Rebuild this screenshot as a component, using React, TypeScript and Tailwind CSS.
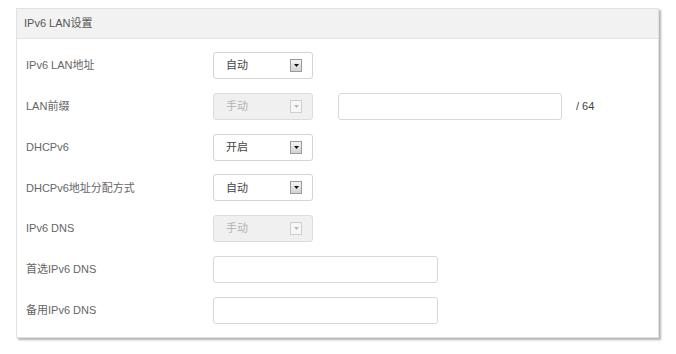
import React from 'react';

const font = { fontFamily: '"Liberation Sans", Arial, "Noto Sans CJK SC", sans-serif' };

const Select = ({ value, disabled = false }: { value: string; disabled?: boolean }) => (
    <div
        className={`w-[100px] h-[27px] rounded-[3px] border flex items-center justify-between pl-[12px] pr-[10px] ${disabled ? 'bg-[#f0f0f0] border-[#dcdcdc] text-[#b4b4b4]' : 'bg-white border-[#d4d4d4] text-[#444]'}`}
    >
        <span className="text-[11px]">{value}</span>
        <span
            className={`w-[12px] h-[13px] border flex items-center justify-center ${disabled ? 'border-[#cfcfcf] bg-[#f7f7f7]' : 'border-[#999] bg-gradient-to-b from-[#f4f4f4] to-[#d2d2d2]'}`}
        >
            <svg width="5" height="3" viewBox="0 0 5 3">
                <path d="M0 0h5L2.5 3z" fill={disabled ? '#b8b8b8' : '#111'} />
            </svg>
        </span>
    </div>
);

const Input = ({ w }: { w: string }) => (
    <div className={`${w} h-[27px] rounded-[3px] border border-[#d8d8d8] bg-white`} />
);

const Row = ({ label, children }: { label: string; children: React.ReactNode }) => (
    <div className="flex items-center h-[27px]">
        <div className="w-[187px] text-[11px] text-[#666]">{label}</div>
        {children}
    </div>
);

export default function App() {
    return (
        <div className="w-[676px] h-[354px] bg-white pt-[8px] pl-[16px]" style={font}>
            <div className="w-[643px] h-[330px] bg-white border border-[#e2e2e2] shadow-[2px_2px_2px_rgba(0,0,0,0.3)]">
                <div className="h-[30px] bg-[#f2f2f2] border-b border-[#e4e4e4] flex items-center pl-[7px] text-[11px] text-[#555]">
                    IPv6 LAN设置
                </div>
                <div className="flex flex-col gap-[13.8px] pt-[13px] pl-[9px]">
                    <Row label="IPv6 LAN地址">
                        <Select value="自动" />
                    </Row>
                    <Row label="LAN前缀">
                        <Select value="手动" disabled />
                        <div className="ml-[25px]">
                            <Input w="w-[224px]" />
                        </div>
                        <span className="ml-[14px] text-[11px] text-[#444]">/ 64</span>
                    </Row>
                    <Row label="DHCPv6">
                        <Select value="开启" />
                    </Row>
                    <Row label="DHCPv6地址分配方式">
                        <Select value="自动" />
                    </Row>
                    <Row label="IPv6 DNS">
                        <Select value="手动" disabled />
                    </Row>
                    <Row label="首选IPv6 DNS">
                        <Input w="w-[225px]" />
                    </Row>
                    <Row label="备用IPv6 DNS">
                        <Input w="w-[225px]" />
                    </Row>
                </div>
            </div>
        </div>
    );
}
